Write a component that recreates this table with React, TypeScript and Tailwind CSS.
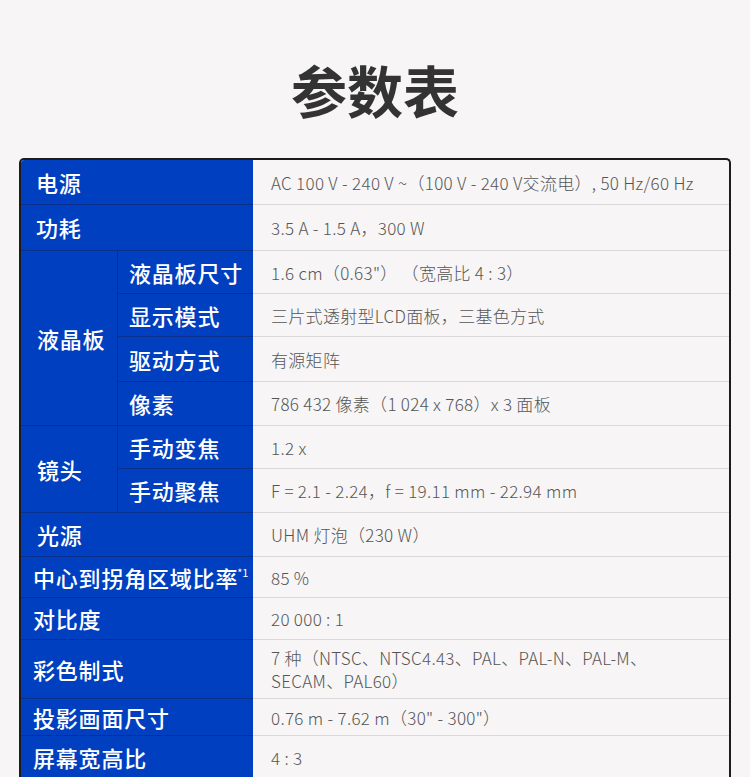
import React from 'react'

type Row = {
  group?: { text: string; span: string }
  label?: string
  sub?: string
  value: React.ReactNode
  pl?: string
}

const rows: Row[] = [
  { label: '电源', value: 'AC 100 V - 240 V ~（100 V - 240 V交流电）, 50 Hz/60 Hz', pl: 'pl-[15px]' },
  { label: '功耗', value: '3.5 A - 1.5 A，300 W', pl: 'pl-[15px]' },
  { group: { text: '液晶板', span: 'row-span-4' }, sub: '液晶板尺寸', value: '1.6 cm（0.63"） （宽高比 4 : 3）' },
  { sub: '显示模式', value: '三片式透射型LCD面板，三基色方式' },
  { sub: '驱动方式', value: '有源矩阵' },
  { sub: '像素', value: '786 432 像素（1 024 x 768）x 3 面板' },
  { group: { text: '镜头', span: 'row-span-2' }, sub: '手动变焦', value: '1.2 x' },
  { sub: '手动聚焦', value: 'F = 2.1 - 2.24，f = 19.11 mm - 22.94 mm' },
  { label: '光源', value: 'UHM 灯泡（230 W）', pl: 'pl-[16px]' },
  { label: '中心到拐角区域比率', value: '85 %', pl: 'pl-[12px]' },
  { label: '对比度', value: '20 000 : 1', pl: 'pl-[12px]' },
  {
    label: '彩色制式',
    value: (
      <>
        7 种（NTSC、NTSC4.43、PAL、PAL-N、PAL-M、
        <br />
        SECAM、PAL60）
      </>
    ),
    pl: 'pl-[12px]',
  },
  { label: '投影画面尺寸', value: '0.76 m - 7.62 m（30" - 300"）', pl: 'pl-[12px]' },
  { label: '屏幕宽高比', value: '4 : 3', pl: 'pl-[12px]' },
]

const blueCell = 'flex items-center border-b border-[#0b2f8c] bg-[#0040c0] text-[22px] font-medium tracking-[0.8px] text-white'

export default function App() {
  return (
    <div className="min-h-screen bg-[#f7f5f6] font-['Noto_Sans_CJK_SC','Noto_Sans',sans-serif]">
      <div className="h-[158px] pt-[59px] text-center text-[56px] font-bold leading-[60px] text-[#333]">
        参数表
      </div>

      <div className="ml-[19px] w-[712px] overflow-hidden rounded-t-[5px] border-2 border-b-0 border-[#1c1c1c]">
        <div className="grid grid-cols-[97px_135px_1fr] grid-rows-[45px_46px_43px_43px_45px_44px_43px_44px_44px_41px_42px_59px_37px_44px]">
          {rows.map((r, i) => (
            <React.Fragment key={i}>
              {r.label && (
                <div className={`col-span-2 ${blueCell} ${r.pl}`}>
                  {r.label}
                  {r.label === '中心到拐角区域比率' && (
                    <sup className="-ml-[1px] text-[11px] font-normal tracking-normal">*1</sup>
                  )}
                </div>
              )}
              {r.group && (
                <div className={`${r.group.span} border-r pl-[16px] ${blueCell}`}>{r.group.text}</div>
              )}
              {r.sub && <div className={`pl-[11px] ${blueCell}`}>{r.sub}</div>}
              <div className="flex items-center border-b border-[#d9d9d9] pl-[18px] text-[17px] font-light leading-[23px] tracking-[0.3px] text-[#555]">
                <div>{r.value}</div>
              </div>
            </React.Fragment>
          ))}
        </div>
      </div>
    </div>
  )
}
